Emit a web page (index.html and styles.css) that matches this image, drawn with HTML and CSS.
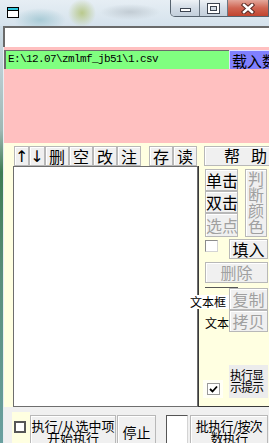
FILE: index.html
```html
<!DOCTYPE html>
<html lang="zh-CN">
<head>
    <meta charset="UTF-8">
    <title>批执行</title>
    <link rel="stylesheet" href="styles.css">
</head>
<body>
<div class="window">
    <div class="titlebar">
        <svg class="app-icon" width="12" height="11" viewBox="0 0 12 11">
            <rect x="0.5" y="0.5" width="11" height="10" fill="#fff" stroke="#000"/>
            <rect x="1" y="1" width="10" height="2" fill="#2ec8e0"/>
            <path d="M1 3.5h10" stroke="#000"/>
        </svg>
        <div class="caption">
            <div class="cap min"><span></span></div>
            <div class="cap max"><span></span></div>
            <div class="cap close">
                <svg width="14" height="11" viewBox="0 0 14 11">
                    <path d="M3 2l8 7M11 2l-8 7" stroke="#5a2a24" stroke-width="4.5" stroke-linecap="square"/>
                    <path d="M3 2l8 7M11 2l-8 7" stroke="#fff" stroke-width="2.5" stroke-linecap="square"/>
                </svg>
            </div>
        </div>
    </div>

    <div class="frame">
        <div class="edge"></div>
        <div class="client">
            <div class="cmd"></div>

            <div class="pink">
                <div class="pathrow">
                    <div class="path">E:\12.07\zmlmf_jb51\1.csv</div>
                    <button class="load">载入数据</button>
                </div>
            </div>

            <div class="toolbar">
                <button class="btn arrow w15">↑</button>
                <button class="btn arrow w16">↓</button>
                <button class="btn w24">删</button>
                <button class="btn w24">空</button>
                <button class="btn w24">改</button>
                <button class="btn w24">注</button>
                <button class="btn w24 gap8">存</button>
                <button class="btn w24">读</button>
                <button class="btn help"><span>帮</span><span>助</span></button>
            </div>

            <div class="main">
                <div class="list"></div>
                <div class="side">
                    <div class="click-grid">
                        <button class="btn big">单击</button>
                        <button class="btn big off color">判断颜色</button>
                        <button class="btn big">双击</button>
                        <button class="btn big off">选点</button>
                    </div>
                    <div class="row fill-row">
                        <span class="check"></span>
                        <button class="btn big fill">填入</button>
                    </div>
                    <button class="btn big off delete">删除</button>
                    <div class="rule"></div>
                    <div class="row">
                        <span class="label box-label">文本框</span>
                        <button class="btn big off copy">复制</button>
                    </div>
                    <div class="row">
                        <span class="label text-label">文本</span>
                        <button class="btn big off copy">拷贝</button>
                    </div>
                    <div class="row tip-row">
                        <span class="check-wrap">
                            <span class="check on">
                                <svg width="9" height="9" viewBox="0 0 9 9"><path d="M1 4l2.5 2.5L8 1.5" fill="none" stroke="#000" stroke-width="1.8"/></svg>
                            </span>
                        </span>
                        <span class="tip">执行显示提示</span>
                    </div>
                </div>
            </div>

            <div class="bottom">
                <div class="cream-patch"><span class="check dark"></span></div>
                <button class="btn small run">执行/从选中项开始执行</button>
                <button class="btn stop">停止</button>
                <div class="count"></div>
                <button class="btn small batch">批执行/按次数执行</button>
            </div>
        </div>
    </div>
</div>
</body>
</html>
```

FILE: styles.css
```css
* {
    box-sizing: border-box;
}
html, body {
    margin: 0;
    padding: 0;
}
body {
    width: 269px;
    height: 443px;
    overflow: hidden;
    font-family: "Noto Sans CJK SC", sans-serif;
    background: #dbe6ee;
}
.window {
    display: flex;
    flex-direction: column;
    height: 443px;
    overflow: hidden;
}

/* title bar (blurred glass) */
.titlebar {
    height: 26px;
    flex: none;
    display: flex;
    align-items: flex-start;
    background:
        radial-gradient(ellipse 14px 14px at 82px 13px, #b9c98c, rgba(200,215,170,0) 100%),
        radial-gradient(ellipse 26px 12px at 40px 20px, #a9cbd6, rgba(200,225,235,0) 100%),
        radial-gradient(ellipse 30px 8px at 130px 12px, #c2ccd4, rgba(220,230,238,0) 100%),
        linear-gradient(#e6eef4, #d5e2ec);
}
.app-icon {
    margin: 7px 0 0 7px;
}
.caption {
    margin-left: auto;
    width: 99px;
    height: 17px;
    display: flex;
    border: 1px solid #56626e;
    border-top: none;
    border-radius: 0 0 0 5px;
    overflow: hidden;
}
.cap {
    height: 100%;
    display: flex;
    align-items: center;
    justify-content: center;
    background: linear-gradient(#eef2f6, #d3dce6 50%, #c3cfdb);
    border-right: 1px solid #6c7884;
}
.min {
    width: 29px;
    align-items: flex-end;
    padding-bottom: 4px;
}
.min span {
    width: 11px;
    height: 4px;
    background: #fff;
    border: 1px solid #3c4450;
}
.max {
    width: 28px;
}
.max span {
    width: 11px;
    height: 9px;
    border: 2px solid #fff;
    outline: 1px solid #3c4450;
    box-shadow: inset 0 0 0 1px #3c4450;
}
.close {
    flex: 1;
    border-right: none;
    background: linear-gradient(#e4a89c, #d06552 50%, #c1442f);
}

/* window frame */
.frame {
    flex: 1;
    display: flex;
}
.edge {
    width: 4px;
    flex: none;
    background: linear-gradient(#cfdde8, #9fb8b4 25%, #3f7d52 35%, #5a8f7a 60%, #6aa0a0);
    border-right: 1px solid #e8eef2;
}
.client {
    flex: 1;
    display: flex;
    flex-direction: column;
    min-width: 0;
}
.cmd {
    height: 21px;
    flex: none;
    background: #fff;
    border-top: 2px solid #6a6a6a;
    border-left: 2px solid #6a6a6a;
    margin-left: -1px;
}
.pink {
    height: 96px;
    flex: none;
    background: #ffc0c0;
    padding-top: 3px;
}
.pathrow {
    display: flex;
    height: 19px;
}
.path {
    width: 225px;
    flex: none;
    background: #80ff80;
    border-top: 1px solid #6a6a6a;
    border-left: 2px solid #6a6a6a;
    font-family: "Liberation Mono", monospace;
    font-size: 11px;
    letter-spacing: -0.6px;
    line-height: 17px;
    padding-left: 2px;
    white-space: nowrap;
}
.load {
    flex: none;
    width: 52px;
    background: #8080ff;
    border: none;
    border-left: 1px solid #e0e0ff;
    border-top: 1px solid #e0e0ff;
    font-family: "Noto Sans CJK SC", sans-serif;
    font-size: 15px;
    line-height: 17px;
    padding: 0 0 0 2px;
    text-align: left;
    white-space: nowrap;
    color: #000;
}

/* buttons */
.btn {
    height: 20px;
    padding: 0;
    margin: 0;
    background: #f0f0f0;
    border: 1px solid #b8b8b8;
    box-shadow: inset 1px 1px 0 #fff;
    font-family: "Noto Sans CJK SC", sans-serif;
    font-size: 16px;
    line-height: 17px;
    color: #000;
    white-space: nowrap;
    flex: none;
}
.btn.off {
    color: #a0a0a0;
}

.toolbar {
    height: 23px;
    flex: none;
    background: #ffffe1;
    display: flex;
    align-items: flex-end;
    padding-left: 10px;
}
.btn.arrow {
    font-family: "DejaVu Sans", sans-serif;
    font-size: 16px;
}
.w15 { width: 15px; }
.w16 { width: 16px; }
.w24 { width: 24px; }
.gap8 { margin-left: 8px; }
.help {
    width: 65px;
    margin-left: 7px;
    display: flex;
    gap: 11px;
    padding-left: 19px;
    border-right: none;
}

.main {
    height: 241px;
    flex: none;
    display: flex;
    background: #ffffe1;
}
.list {
    width: 185px;
    margin-left: 9px;
    background: #fff;
    border: 1px solid #6e6e6e;
}
.side {
    width: 71px;
    flex: none;
    border-left: 1px solid #3a3a3a;
    border-bottom: 1px solid #3a3a3a;
    padding-left: 6px;
}
.click-grid {
    margin-top: 3px;
    display: grid;
    grid-template-columns: 33px 22px;
    grid-template-rows: 22px 22px 24px;
    column-gap: 7px;
}
.click-grid .btn {
    height: 100%;
    width: 100%;
}
.btn.color {
    grid-column: 2;
    grid-row: 1 / 4;
    white-space: normal;
    line-height: 16px;
    padding-top: 0;
    display: flex;
    align-items: flex-start;
}
.row {
    display: flex;
    align-items: center;
}
.fill-row {
    margin-top: 2px;
    align-items: flex-start;
}
.check {
    width: 13px;
    height: 12px;
    flex: none;
    background: #fff;
    border: 1px solid #d4d4d4;
    border-top-color: #8c8c8c;
    border-left-color: #8c8c8c;
    display: flex;
    align-items: center;
    justify-content: center;
}
.fill-row .check {
    margin-top: 1px;
}
.fill {
    width: 39px;
    margin-left: 11px;
}
.delete {
    width: 63px;
    height: 21px;
    margin-top: 3px;
}
.rule {
    width: 33px;
    height: 1px;
    background: #555;
    margin-top: 3px;
}
.copy {
    width: 39px;
    height: 22px;
}
.label {
    font-size: 12px;
    line-height: 14px;
    white-space: nowrap;
    flex: none;
}
.box-label {
    width: 39px;
    margin-left: -15px;
    margin-top: 6px;
    background: #fff;
    overflow: hidden;
}
.text-label {
    width: 24px;
    margin-top: 4px;
}
.tip-row {
    margin-top: 33px;
    align-items: flex-end;
}
.check-wrap {
    width: 20px;
    height: 18px;
    margin-left: -2px;
    background: #fffff6;
    display: flex;
    align-items: center;
    justify-content: center;
}
.check.on {
    border-color: #9a9a9a;
}
.tip {
    width: 39px;
    height: 33px;
    margin-left: 6px;
    background: #ececec;
    font-size: 12px;
    line-height: 12px;
    letter-spacing: -1px;
    padding: 4px 0 0 1px;
}

/* bottom bar */
.bottom {
    height: 36px;
    flex: none;
    display: flex;
    align-items: flex-start;
    background: #f0f0f0;
}
.bottom .btn {
    height: 32px;
    margin-top: 8px;
}
.cream-patch {
    width: 18px;
    height: 31px;
    flex: none;
    margin: 5px 0 0 8px;
    background: #ffffe1;
    padding: 9px 0 0 2px;
}
.check.dark {
    width: 12px;
    height: 12px;
    border: 2px solid #575757;
}
.btn.small {
    font-size: 13px;
    line-height: 12px;
    white-space: normal;
    padding: 2px 0 0;
    text-align: center;
}
.run {
    width: 86px;
}
.stop {
    width: 39px;
    margin-left: 1px;
    font-size: 14px;
    line-height: 28px;
    padding-top: 2px;
}
.count {
    width: 22px;
    height: 32px;
    flex: none;
    margin: 8px 0 0 10px;
    background: #fff;
    border: 1px solid #d4d4d4;
    border-top-color: #555;
    border-left-color: #555;
}
.btn.small.batch {
    width: 78px;
    margin-left: 2px;
    padding: 2px 0 0;
    letter-spacing: -0.6px;
}
```
